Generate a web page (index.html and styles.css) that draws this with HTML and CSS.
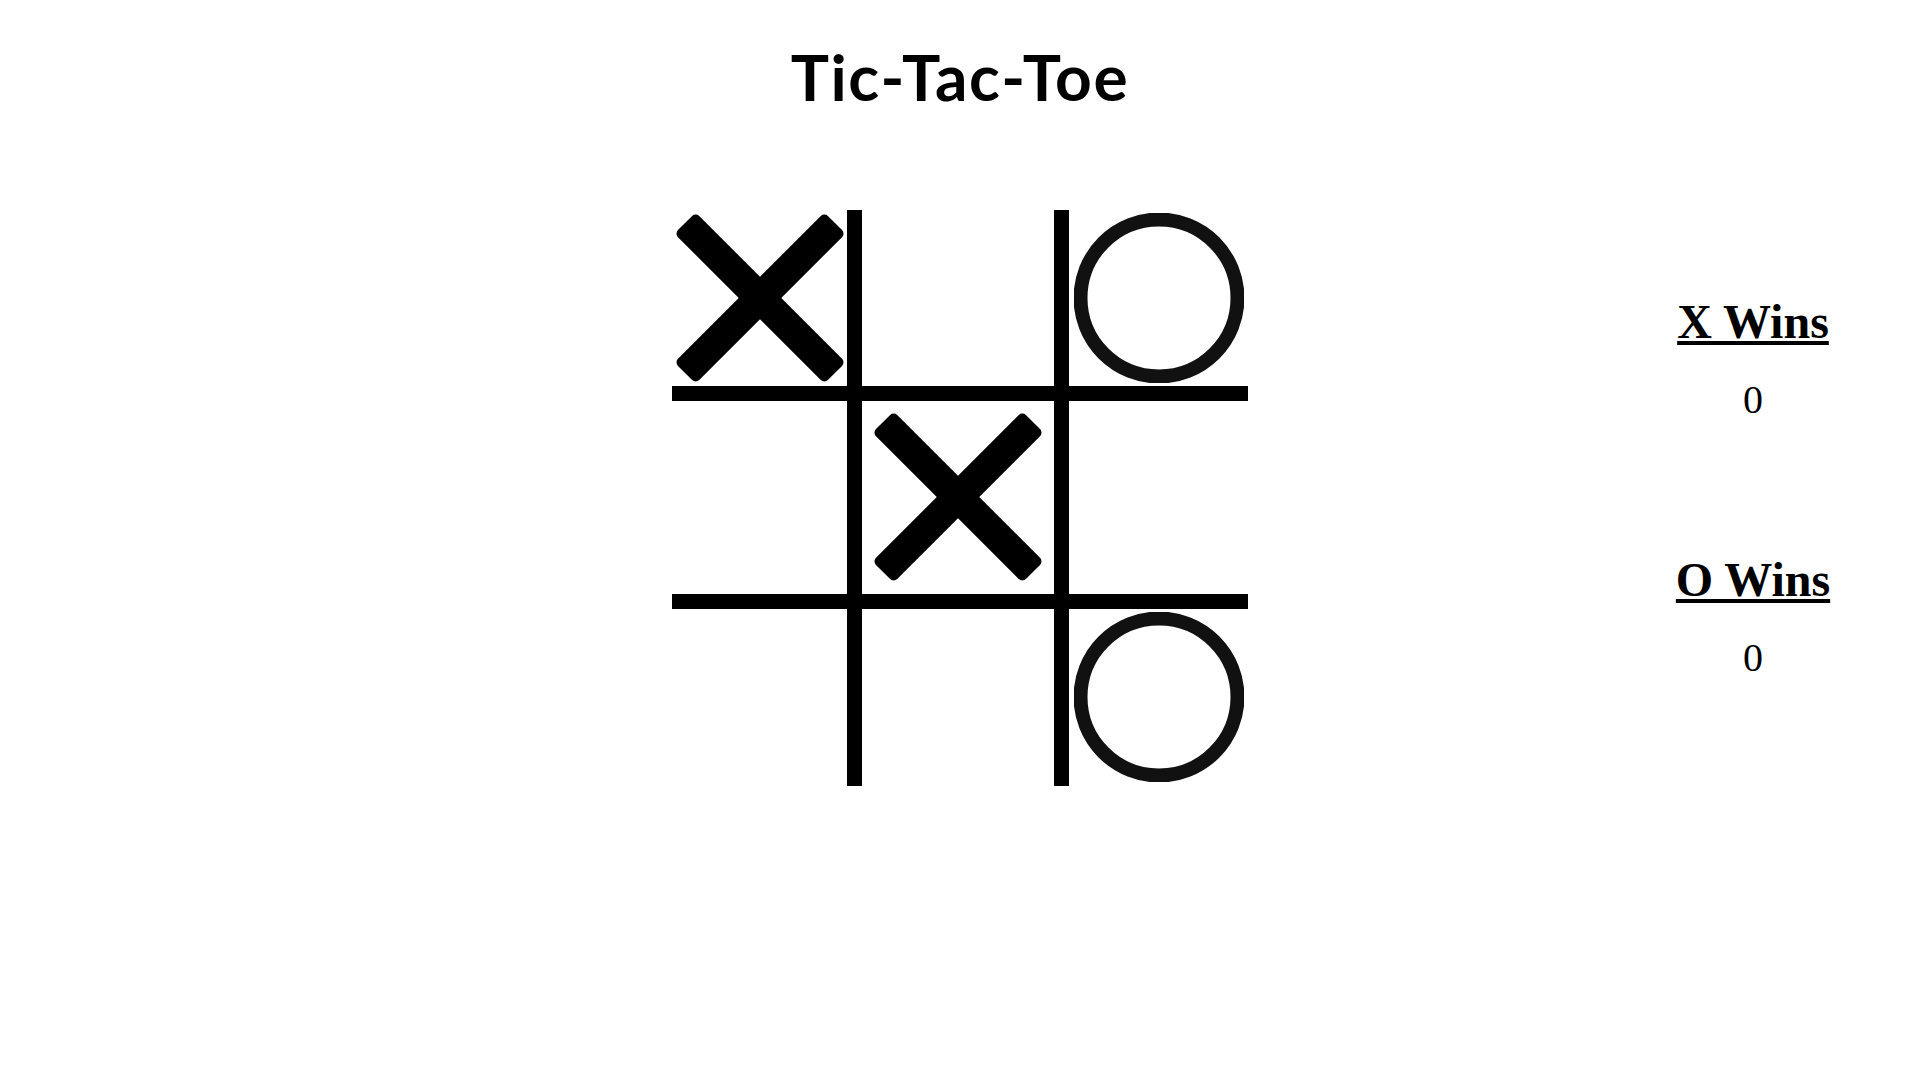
FILE: index.html
```html
<!DOCTYPE html>
<html lang="en">
<head>
    <meta charset="UTF-8">
    <meta name="viewport" content="width=device-width, initial-scale=1.0">
    <title>Tic-Tac-Toe</title>
    <link rel="stylesheet" href="styles.css">
</head>
<body>
    <h1 class="title">Tic-Tac-Toe</h1>
    <div class="game">
        <div class="spacer"></div>
        <div class="board">
            <div class="cell c1 r1">
                <svg class="mark" viewBox="0 0 170 170"><g transform="translate(85 85)"><rect x="-106" y="-15" width="212" height="30" rx="5" transform="rotate(45)"/><rect x="-106" y="-15" width="212" height="30" rx="5" transform="rotate(-45)"/></g></svg>
            </div>
            <div class="cell c2 r1"></div>
            <div class="cell c3 r1">
                <svg class="mark" viewBox="0 0 170 170"><circle cx="85" cy="85" r="78.5" class="ring"/></svg>
            </div>
            <div class="cell c1 r2"></div>
            <div class="cell c2 r2">
                <svg class="mark" viewBox="0 0 170 170"><g transform="translate(85 85)"><rect x="-106" y="-15" width="212" height="30" rx="5" transform="rotate(45)"/><rect x="-106" y="-15" width="212" height="30" rx="5" transform="rotate(-45)"/></g></svg>
            </div>
            <div class="cell c3 r2"></div>
            <div class="cell c1 r3"></div>
            <div class="cell c2 r3"></div>
            <div class="cell c3 r3">
                <svg class="mark" viewBox="0 0 170 170"><circle cx="85" cy="85" r="78.5" class="ring"/></svg>
            </div>
        </div>
        <div class="scores">
            <div class="score_block">
                <h2>X Wins</h2>
                <p id="x_score">0</p>
            </div>
            <div class="score_block">
                <h2>O Wins</h2>
                <p id="o_score">0</p>
            </div>
        </div>
    </div>
</body>
</html>
```

FILE: styles.css
```css
body {
    margin: 0;
    padding: 0;
    background-color: #fff;
    color: #000;
    font-family: 'Liberation Serif', serif;
}

.title {
    font-family: 'Lato', sans-serif;
    font-weight: 700;
    font-size: 64px;
    letter-spacing: 1.6px;
    line-height: 1.2;
    text-align: center;
    margin: 39px 0 94px 0;
}

.game {
    display: grid;
    grid-template-columns: 1fr 576px 1fr;
}

.board {
    display: grid;
    grid-template-columns: 190px 207px 179px;
    grid-template-rows: 191px 208px 177px;
    width: 576px;
    height: 576px;
}

.cell {
    box-sizing: border-box;
    display: flex;
    align-items: center;
    justify-content: center;
}

.c1, .c2 {
    border-right: 15px solid #000;
}

.r1, .r2 {
    border-bottom: 15px solid #000;
}

.mark {
    width: 170px;
    height: 170px;
    display: block;
    fill: #000;
}

.ring {
    fill: none;
    stroke: #111;
    stroke-width: 14;
}

.scores {
    width: 300px;
    margin-left: auto;
    margin-right: 17px;
    padding-top: 84px;
    text-align: center;
}

.score_block h2 {
    font-size: 48px;
    font-weight: 700;
    text-decoration: underline;
    line-height: 55px;
    margin: 0;
}

.score_block p {
    font-size: 40px;
    line-height: 46px;
    margin: 28px 0 0 0;
}

.score_block + .score_block {
    margin-top: 129px;
}
```
